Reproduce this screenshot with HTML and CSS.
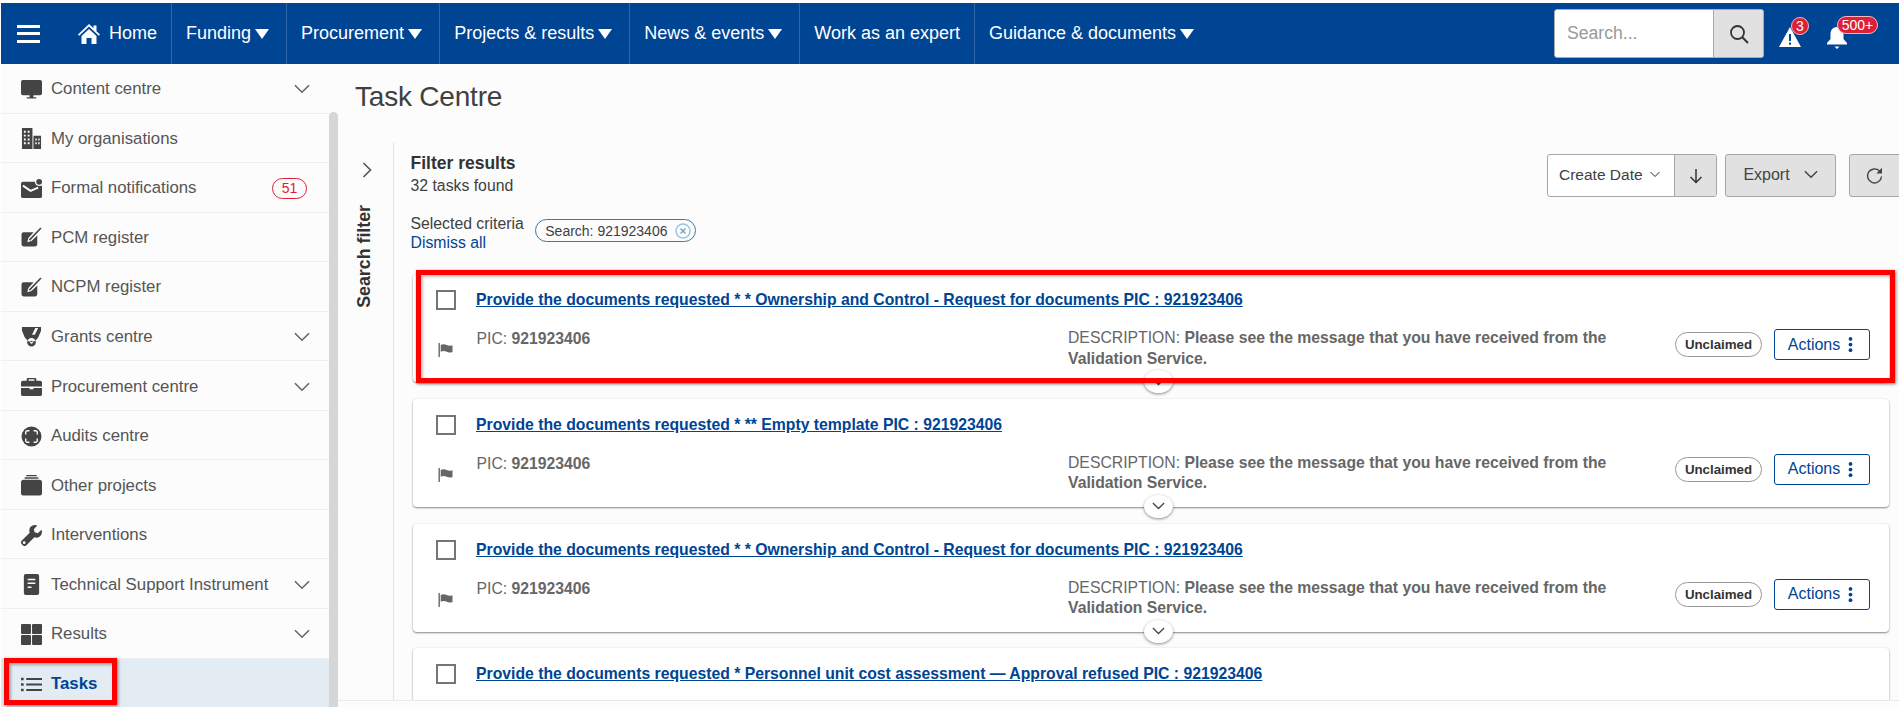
FILE: index.html
```html
<!DOCTYPE html>
<html lang="en">
<head>
  <meta charset="UTF-8">
  <title>Task Centre</title>
  <link rel="stylesheet" href="styles.css">
</head>
<body>
  <svg class="defs" aria-hidden="true">
    <symbol id="i-chev" viewBox="0 0 16 10"><path d="M1 1.2l7 7 7-7" fill="none" stroke="currentColor" stroke-width="1.6"/></symbol>
    <symbol id="i-flag" viewBox="0 0 16 16"><path d="M1 1h1.400v14H1zM3.200 3c2.500-1.200 4.300-.8 6 0s3.500 1 5.800.2V10c-2.300.9-4.100.6-5.800-.2s-3.500-1.100-6-.1z" fill="currentColor"/></symbol>
    <symbol id="i-kebab" viewBox="0 0 4 16"><circle cx="2" cy="2" r="2"/><circle cx="2" cy="8" r="2"/><circle cx="2" cy="14" r="2"/></symbol>
    <symbol id="i-edit" viewBox="0 0 20 20"><path d="M2.500 5H12l-5 5.500-1 4 4-1.200L15.500 8v8.500a2 2 0 0 1-2 2h-11a2 2 0 0 1-2-2V7a2 2 0 0 1 2-2z" fill="currentColor"/><path d="M8 12.500L19 1" stroke="currentColor" stroke-width="1.500" fill="none"/></symbol>
  </svg>

  <header class="topbar">
    <button class="burger" aria-label="Menu"><span></span><span></span><span></span></button>
    <nav class="mainnav">
      <a class="nav-item nav-home">
        <svg class="home-ico" viewBox="0 0 22 20"><path fill="currentColor" d="M11 0l4.500 4.300V1.500h3v5.700L22 10.500l-1.200 1.300L11 2.600 1.200 11.800 0 10.500zM3.500 12L11 5l7.500 7v8h-5v-6h-5v6h-5z"/></svg>
        Home
      </a>
      <a class="nav-item has-caret">Funding<i class="caret"></i></a>
      <a class="nav-item has-caret">Procurement<i class="caret"></i></a>
      <a class="nav-item has-caret">Projects &amp; results<i class="caret"></i></a>
      <a class="nav-item has-caret">News &amp; events<i class="caret"></i></a>
      <a class="nav-item">Work as an expert</a>
      <a class="nav-item has-caret nav-last">Guidance &amp; documents<i class="caret"></i></a>
    </nav>
    <div class="searchbox">
      <span class="search-input">Search...</span>
      <span class="search-btn">
        <svg viewBox="0 0 20 20" width="20" height="20"><circle cx="8.500" cy="8.500" r="6.500" fill="none" stroke="currentColor" stroke-width="1.800"/><path d="M13.300 13.300L19 19" stroke="currentColor" stroke-width="2"/></svg>
      </span>
    </div>
    <div class="alert-ico">
      <svg viewBox="0 0 22 20" width="22" height="20"><path fill="#fff" d="M11 0l11 20H0z"/><path fill="#004494" d="M10 7h2v7h-2zM10 15.500h2v2.200h-2z"/></svg>
      <span class="count count-round">3</span>
    </div>
    <div class="bell-ico">
      <svg viewBox="0 0 20 22" width="20" height="22"><path fill="#fff" d="M10 0c4 0 6.500 3 6.500 7v5l3.500 4v1.500H0V16l3.500-4V7C3.500 3 6 0 10 0zM7.500 19.500h5L10 22z"/></svg>
      <span class="count count-wide">500+</span>
    </div>
  </header>

  <div class="layout">
    <aside class="sidebar">
      <ul class="sidemenu">
        <li class="side-row">
          <svg class="side-ico" viewBox="0 0 22 20"><path fill="currentColor" d="M2 0h18a2 2 0 0 1 2 2v12a2 2 0 0 1-2 2H2a2 2 0 0 1-2-2V2a2 2 0 0 1 2-2zM9 16h4v2h3v1.500H6V18h3z"/></svg>
          <span class="side-label">Content centre</span><svg class="side-chev"><use href="#i-chev"/></svg>
        </li>
        <li class="side-row">
          <svg class="side-ico" viewBox="0 0 22 22"><path fill="currentColor" fill-rule="evenodd" d="M1 0h11v22H1zM3 3v2h2V3zm4 0v2h2V3zM3 7v2h2V7zm4 0v2h2V7zM3 11v2h2v-2zm4 0v2h2v-2zM3 15v2h2v-2zm4 0v2h2v-2zM13 8h8v14h-8zm2 3v2h1.500v-2zm3 0v2h1.500v-2zm-3 4v2h1.500v-2zm3 0v2h1.500v-2z"/></svg>
          <span class="side-label">My organisations</span>
        </li>
        <li class="side-row">
          <svg class="side-ico" viewBox="0 0 22 20"><path fill="currentColor" d="M2 3h12.500a5 5 0 0 0 5 4.500c.9 0 1.700-.2 2.500-.6V18a2 2 0 0 1-2 2H2a2 2 0 0 1-2-2V5a2 2 0 0 1 2-2z"/><circle cx="19" cy="3" r="3" fill="currentColor"/><path d="M2 7l8 5.500L18 9" fill="none" stroke="#fcfcfc" stroke-width="2"/></svg>
          <span class="side-label">Formal notifications</span><span class="side-badge">51</span>
        </li>
        <li class="side-row">
          <svg class="side-ico"><use href="#i-edit"/></svg>
          <span class="side-label">PCM register</span>
        </li>
        <li class="side-row">
          <svg class="side-ico"><use href="#i-edit"/></svg>
          <span class="side-label">NCPM register</span>
        </li>
        <li class="side-row">
          <svg class="side-ico" viewBox="0 0 22 22"><path fill="currentColor" fill-rule="evenodd" d="M1 0h20v4l-3 7-2.500 3a6.500 6.500 0 0 1-9 0L4 11 1 4zM15 1l-3.500 7h3L18 1zM11 11.500a4.500 4.500 0 1 0 0 9 4.500 4.500 0 0 0 0-9zm0 3a1.500 1.500 0 1 1 0 3 1.500 1.500 0 0 1 0-3z"/></svg>
          <span class="side-label">Grants centre</span><svg class="side-chev"><use href="#i-chev"/></svg>
        </li>
        <li class="side-row">
          <svg class="side-ico" viewBox="0 0 22 20"><path fill="currentColor" fill-rule="evenodd" d="M7 1h8a1 1 0 0 1 1 1v2h4a2 2 0 0 1 2 2v4H0V6a2 2 0 0 1 2-2h4V2a1 1 0 0 1 1-1zm1 1.500V4h6V2.500zM0 11.500h9V13h4v-1.500h9V18a2 2 0 0 1-2 2H2a2 2 0 0 1-2-2z"/></svg>
          <span class="side-label">Procurement centre</span><svg class="side-chev"><use href="#i-chev"/></svg>
        </li>
        <li class="side-row">
          <svg class="side-ico" viewBox="0 0 20 20"><circle cx="10" cy="10" r="9.500" fill="currentColor"/><path d="M4.500 8V6a1.500 1.500 0 0 1 1.500-1.500h2M12 4.500h2A1.500 1.500 0 0 1 15.500 6v2M15.500 12v2a1.500 1.500 0 0 1-1.500 1.500h-2M8 15.500H6A1.500 1.500 0 0 1 4.500 14v-2" fill="none" stroke="#fcfcfc" stroke-width="1.300"/></svg>
          <span class="side-label">Audits centre</span>
        </li>
        <li class="side-row">
          <svg class="side-ico" viewBox="0 0 20 20"><path fill="currentColor" d="M5 0h10v1.200H5zM3.500 2.200h13v1.300h-13zM2.500 4.500h15A2.500 2.500 0 0 1 20 7v10.500a2 2 0 0 1-2 2H2a2 2 0 0 1-2-2V7a2.500 2.500 0 0 1 2.500-2.500z"/></svg>
          <span class="side-label">Other projects</span>
        </li>
        <li class="side-row">
          <svg class="side-ico" viewBox="0 0 20 20"><path fill="currentColor" fill-rule="evenodd" d="M19.500 4.500l-3.500 3.300-3-.8-.8-3L15.500.5C13-.6 10 .2 8.700 2.300 7.700 4 7.700 5.700 8.300 7.300L.8 14.800a2.500 2.500 0 0 0 0 3.500l.9.9a2.500 2.500 0 0 0 3.500 0l7.500-7.500c1.600.6 3.300.5 4.900-.5 2.100-1.400 2.900-4.200 1.900-6.700zM3 15.500a1.300 1.300 0 1 1 0 2.600 1.300 1.300 0 0 1 0-2.600z"/></svg>
          <span class="side-label">Interventions</span>
        </li>
        <li class="side-row">
          <svg class="side-ico" viewBox="0 0 22 22"><path fill="currentColor" fill-rule="evenodd" d="M5 0h12a2 2 0 0 1 2 2v18a2 2 0 0 1-2 2H5a2 2 0 0 1-2-2V2a2 2 0 0 1 2-2zm2 5v1.600h8V5zm0 4v1.600h8V9zm0 4v1.600h4V13z"/></svg>
          <span class="side-label">Technical Support Instrument</span><svg class="side-chev"><use href="#i-chev"/></svg>
        </li>
        <li class="side-row">
          <svg class="side-ico" viewBox="0 0 20 20"><path fill="currentColor" d="M1 0h7.500a1 1 0 0 1 1 1v7.500a1 1 0 0 1-1 1H1a1 1 0 0 1-1-1V1a1 1 0 0 1 1-1zM11.500 0H19a1 1 0 0 1 1 1v7.500a1 1 0 0 1-1 1h-7.500a1 1 0 0 1-1-1V1a1 1 0 0 1 1-1zM1 10.500h7.500a1 1 0 0 1 1 1V19a1 1 0 0 1-1 1H1a1 1 0 0 1-1-1v-7.500a1 1 0 0 1 1-1zM11.500 10.500H19a1 1 0 0 1 1 1V19a1 1 0 0 1-1 1h-7.500a1 1 0 0 1-1-1v-7.500a1 1 0 0 1 1-1z"/></svg>
          <span class="side-label">Results</span><svg class="side-chev"><use href="#i-chev"/></svg>
        </li>
        <li class="side-row is-active">
          <svg class="side-ico" viewBox="0 0 20 14"><path fill="currentColor" d="M0 .5h2.500V3H0zM5 .8h15v2H5zM0 5.700h2.500v2.500H0zM5 6h15v2H5zM0 11h2.500v2.500H0zM5 11.200h15v2H5z"/></svg>
          <span class="side-label">Tasks</span>
        </li>
      </ul>
      <div class="thumb"></div>
      <div class="tasks-mark"></div>
    </aside>

    <div class="main">
      <div class="main-body">
        <h1 class="page-title">Task Centre</h1>
        <div class="workspace">
          <div class="filter-rail">
            <svg class="rail-chev" viewBox="0 0 10 16"><path d="M1.500 1l7 7-7 7" fill="none" stroke="currentColor" stroke-width="1.600"/></svg>
            <span class="rail-label">Search filter</span>
          </div>
          <div class="results">
            <div class="results-head">
              <div class="results-info">
                <div class="results-title">Filter results</div>
                <div class="results-count">32 tasks found</div>
                <div class="criteria">
                  <div class="criteria-text">Selected criteria<br><a class="dismiss">Dismiss all</a></div>
                  <span class="chip">Search: 921923406
                    <svg class="chip-x" viewBox="0 0 16 16"><circle cx="8" cy="8" r="7" fill="none" stroke="#9cc6e0" stroke-width="1.500"/><path d="M5.500 5.500l5 5m0-5l-5 5" stroke="#7aa6c6" stroke-width="1.500"/></svg>
                  </span>
                </div>
              </div>
              <div class="toolbar">
                <div class="sort-group">
                  <span class="sort-select">Create Date
                    <svg class="mini-chev"><use href="#i-chev"/></svg>
                  </span>
                  <span class="sort-dir">
                    <svg viewBox="0 0 14 16" width="14" height="16"><path d="M7 1v13.500M1.500 9l5.500 5.500L12.500 9" fill="none" stroke="currentColor" stroke-width="1.500"/></svg>
                  </span>
                </div>
                <span class="tool-btn btn-export">Export<svg class="export-chev"><use href="#i-chev"/></svg></span>
                <span class="tool-btn btn-refresh">
                  <svg viewBox="0 0 18 18" width="18" height="18"><path d="M15.500 9.500a7 7 0 1 1-2-5.500" fill="none" stroke="currentColor" stroke-width="1.400"/><path d="M16 .8v5.700h-5.700z" fill="currentColor"/></svg>
                </span>
              </div>
            </div>

            <article class="task-card">
              <div class="task-top">
                <span class="checkbox"></span>
                <a class="task-title">Provide the documents requested * * Ownership and Control - Request for documents PIC : 921923406</a>
              </div>
              <div class="task-row">
                <svg class="task-flag"><use href="#i-flag"/></svg>
                <div class="task-pic">PIC: <b>921923406</b></div>
                <div class="task-desc">DESCRIPTION: <b>Please see the message that you have received from the</b><br><b>Validation Service.</b></div>
                <span class="pill">Unclaimed</span>
                <span class="actions">Actions<svg class="kebab"><use href="#i-kebab"/></svg></span>
              </div>
              <span class="expand"><svg class="expand-chev"><use href="#i-chev"/></svg></span>
              <div class="card-mark"></div>
            </article>

            <article class="task-card">
              <div class="task-top">
                <span class="checkbox"></span>
                <a class="task-title">Provide the documents requested * ** Empty template PIC : 921923406</a>
              </div>
              <div class="task-row">
                <svg class="task-flag"><use href="#i-flag"/></svg>
                <div class="task-pic">PIC: <b>921923406</b></div>
                <div class="task-desc">DESCRIPTION: <b>Please see the message that you have received from the</b><br><b>Validation Service.</b></div>
                <span class="pill">Unclaimed</span>
                <span class="actions">Actions<svg class="kebab"><use href="#i-kebab"/></svg></span>
              </div>
              <span class="expand"><svg class="expand-chev"><use href="#i-chev"/></svg></span>
            </article>

            <article class="task-card">
              <div class="task-top">
                <span class="checkbox"></span>
                <a class="task-title">Provide the documents requested * * Ownership and Control - Request for documents PIC : 921923406</a>
              </div>
              <div class="task-row">
                <svg class="task-flag"><use href="#i-flag"/></svg>
                <div class="task-pic">PIC: <b>921923406</b></div>
                <div class="task-desc">DESCRIPTION: <b>Please see the message that you have received from the</b><br><b>Validation Service.</b></div>
                <span class="pill">Unclaimed</span>
                <span class="actions">Actions<svg class="kebab"><use href="#i-kebab"/></svg></span>
              </div>
              <span class="expand"><svg class="expand-chev"><use href="#i-chev"/></svg></span>
            </article>

            <article class="task-card">
              <div class="task-top">
                <span class="checkbox"></span>
                <a class="task-title">Provide the documents requested * Personnel unit cost assessment — Approval refused PIC : 921923406</a>
              </div>
            </article>
          </div>
        </div>
      </div>
      <div class="main-foot"></div>
    </div>
  </div>
</body>
</html>
```

FILE: styles.css
```css
:root {
  --blue: #004494;
  --text: #404040;
  --muted: #555;
  --line: #efefef;
  --page: #fcfcfc;
  --btn: #e1e1e1;
  --btn-line: #a6a6a6;
  --red: #dc2035;
  --mark: #ff0000;
}
html, body { height: 100%; margin: 0; }
body {
  box-sizing: border-box;
  padding: 3px 0 0 1px;
  display: flex;
  flex-direction: column;
  overflow: hidden;
  background: #fff;
  color: var(--text);
  font-family: "Liberation Sans", Arial, sans-serif;
  font-size: 16px;
}
.defs { position: absolute; width: 0; height: 0; }
svg { display: block; flex: none; }

/* top bar */
.topbar {
  flex: none;
  height: 61px;
  display: flex;
  align-items: center;
  background: var(--blue);
  color: #fff;
}
.burger {
  width: 23px;
  height: 18px;
  margin-left: 16px;
  padding: 0;
  border: 0;
  background: none;
  display: flex;
  flex-direction: column;
  justify-content: space-between;
}
.burger span { display: block; height: 3px; background: #fff; }
.mainnav { display: flex; align-self: stretch; margin-left: 38px; }
.nav-item {
  display: flex;
  align-items: center;
  padding: 0 14px;
  border-right: 1px solid #2f67a9;
  font-size: 18px;
  white-space: nowrap;
}
.nav-home { padding-left: 0; }
.has-caret { padding-right: 17px; }
.nav-last { border-right: 0; }
.home-ico { width: 22px; height: 20px; margin-right: 9px; }
.caret {
  width: 0;
  height: 0;
  margin-left: 4px;
  border-left: 7px solid transparent;
  border-right: 7px solid transparent;
  border-top: 10px solid #fff;
}
.searchbox {
  margin-left: auto;
  box-sizing: border-box;
  width: 210px;
  height: 49px;
  display: flex;
  border: 1px solid #aaa;
  border-radius: 3px;
  overflow: hidden;
  background: #fff;
}
.search-input {
  flex: 1;
  padding-left: 12px;
  line-height: 46px;
  font-size: 17.6px;
  color: #999;
}
.search-btn {
  width: 49px;
  display: flex;
  align-items: center;
  justify-content: center;
  border-left: 1px solid #aaa;
  background: var(--btn);
  color: #333;
}
.alert-ico, .bell-ico { position: relative; }
.alert-ico { margin-left: 15px; margin-top: 6px; }
.bell-ico { margin-left: 26px; margin-right: 52px; margin-top: 8px; }
.count {
  position: absolute;
  box-sizing: border-box;
  height: 18px;
  border: 1px solid #ffb3bc;
  background: var(--red);
  color: #fff;
  font-size: 14px;
  line-height: 16px;
  text-align: center;
}
.count-round { top: -10px; left: 12px; width: 18px; border-radius: 50%; }
.count-wide { top: -11px; left: 10px; width: 41px; border-radius: 9px; }

/* layout */
.layout { flex: 1; min-height: 0; display: flex; background: var(--page); }

/* side menu */
.sidebar {
  position: relative;
  flex: none;
  width: 337px;
  overflow: hidden;
}
.sidemenu { width: 328px; margin: 0; padding: 0; list-style: none; }
.side-row {
  box-sizing: border-box;
  height: 49.55px;
  display: flex;
  align-items: center;
  padding: 2px 20px 0;
  border-bottom: 1px solid var(--line);
  color: var(--muted);
  font-size: 16.8px;
}
.side-ico { width: 21px; height: 21px; color: #444; }
.side-label { margin-left: 9px; white-space: nowrap; }
.side-chev { width: 16px; height: 10px; margin-left: auto; margin-right: -1px; color: #666; }
.side-badge {
  box-sizing: border-box;
  width: 35px;
  height: 21px;
  margin-left: auto;
  margin-right: 2px;
  border: 1px solid var(--red);
  border-radius: 11px;
  color: var(--red);
  font-size: 14px;
  line-height: 18px;
  text-align: center;
}
.is-active { background: #e3ebf3; border-bottom: 0; }
.is-active .side-label { color: var(--blue); font-weight: bold; }
.thumb {
  position: absolute;
  top: 48px;
  bottom: 0;
  right: 0;
  width: 9px;
  border-radius: 5px 5px 0 0;
  background: #d6d6d6;
}
.tasks-mark {
  position: absolute;
  left: 3px;
  bottom: 2px;
  box-sizing: border-box;
  width: 113px;
  height: 47px;
  border: 5px solid var(--mark);
  box-shadow: 1px 1px 3px rgba(0, 0, 0, .5), inset 2px 2px 3px rgba(0, 0, 0, .3);
}

/* main area */
.main { flex: 1; min-width: 0; display: flex; flex-direction: column; }
.main-body { flex: 1; min-height: 0; overflow: hidden; }
.main-foot { flex: none; height: 7px; border-top: 1px solid #e6e9ef; box-sizing: border-box; }
.page-title {
  margin: 0;
  height: 78px;
  padding-left: 17px;
  font-size: 28px;
  font-weight: normal;
  letter-spacing: -.2px;
  line-height: 66px;
  color: #404040;
}
.workspace { display: flex; height: 560px; }
.filter-rail {
  flex: none;
  box-sizing: border-box;
  width: 56px;
  border-right: 1px solid #e3e3e3;
  padding: 20px 0 0 24px;
  color: #333;
}
.rail-chev { width: 10px; height: 16px; color: #555; }
.rail-label {
  display: block;
  margin: 27px 0 0 -8px;
  writing-mode: vertical-rl;
  transform: rotate(180deg);
  font-weight: bold;
  font-size: 17.8px;
}
.results { flex: 1; min-width: 0; padding-left: 16px; }
.results-head {
  height: 132px;
  display: flex;
  justify-content: space-between;
  box-sizing: border-box;
  padding-top: 10px;
}
.results-info { padding-left: .5px; }
.results-title { font-size: 17.5px; font-weight: bold; color: #333; line-height: 22px; }
.results-count { font-size: 15.8px; line-height: 24px; }
.criteria { display: flex; align-items: flex-start; margin-top: 16px; }
.criteria-text { font-size: 15.8px; line-height: 19px; }
.dismiss { color: var(--blue); }
.chip {
  display: flex;
  align-items: center;
  box-sizing: border-box;
  height: 23px;
  margin-top: 5px;
  margin-left: 11.5px;
  padding: 0 4px 0 9px;
  border: 1px solid #2a7fb8;
  border-radius: 12px;
  font-size: 14px;
  white-space: nowrap;
}
.chip-x { width: 16px; height: 16px; margin-left: 8px; }
.toolbar { display: flex; align-items: flex-start; margin-top: 2px; margin-right: -10px; }
.sort-group {
  display: flex;
  box-sizing: border-box;
  width: 170px;
  height: 43px;
  border: 1px solid var(--btn-line);
  border-radius: 3px;
  overflow: hidden;
  background: #fff;
}
.sort-select {
  flex: 1;
  display: flex;
  align-items: center;
  padding: 0 0 2px 11px;
  font-size: 15.5px;
  white-space: nowrap;
}
.mini-chev { width: 10px; height: 7px; margin-left: 7px; color: #222; }
.sort-dir {
  width: 41px;
  display: flex;
  align-items: center;
  justify-content: center;
  border-left: 1px solid var(--btn-line);
  background: var(--btn);
  color: #333;
}
.tool-btn {
  display: flex;
  align-items: center;
  justify-content: center;
  box-sizing: border-box;
  height: 43px;
  padding-bottom: 2px;
  border: 1px solid var(--btn-line);
  border-radius: 3px;
  background: var(--btn);
  color: #444;
  font-size: 16px;
}
.btn-export { width: 111px; margin-left: 8px; }
.export-chev { width: 14px; height: 9px; margin-left: 14px; }
.btn-refresh { width: 60px; margin-left: 13px; justify-content: flex-start; padding-left: 16px; padding-bottom: 0; }

/* task cards */
.task-card {
  position: relative;
  box-sizing: border-box;
  width: 1475.5px;
  height: 108px;
  margin: 0 0 16.8px 3px;
  padding: 16px 18px 0 22.5px;
  background: #fff;
  border-radius: 4px;
  box-shadow: 0 1px 2px rgba(0, 0, 0, .45), 0 0 2px rgba(0, 0, 0, .08);
}
.task-top { display: flex; align-items: center; }
.checkbox {
  flex: none;
  box-sizing: border-box;
  width: 20px;
  height: 20px;
  border: 2px solid #757575;
  background: #fff;
}
.task-title {
  margin-left: 20.5px;
  color: var(--blue);
  font-size: 15.75px;
  font-weight: bold;
  text-decoration: underline;
  white-space: nowrap;
}
.task-row { display: flex; align-items: flex-start; margin-top: 19px; color: #666; font-size: 15.75px; }
.task-flag { width: 17px; height: 16px; margin: 13px 23px 0 1px; color: #666; }
.task-pic { width: 590px; flex: none; line-height: 20px; }
.task-desc { width: 607px; flex: none; margin: -1px 0 0 1.500px; line-height: 20.6px; box-sizing: border-box; }
.pill {
  box-sizing: border-box;
  width: 87px;
  height: 25px;
  margin-top: 3px;
  border: 1px solid #999;
  border-radius: 13px;
  background: #fff;
  color: #333;
  font-size: 13.3px;
  font-weight: bold;
  line-height: 23px;
  text-align: center;
}
.actions {
  display: flex;
  align-items: center;
  justify-content: center;
  box-sizing: border-box;
  width: 96px;
  height: 31px;
  margin-left: 12px;
  padding-right: 3px;
  border: 1px solid var(--blue);
  border-radius: 3px;
  background: #fff;
  color: var(--blue);
  font-size: 16px;
}
.kebab { width: 5px; height: 15px; margin-left: 8px; fill: var(--blue); }
.expand {
  position: absolute;
  left: 731px;
  bottom: -11px;
  width: 29px;
  height: 23px;
  display: flex;
  align-items: center;
  justify-content: center;
  border-radius: 50%;
  background: #fff;
  box-shadow: 0 1px 3px rgba(0, 0, 0, .45);
  color: #444;
}
.expand-chev { width: 13px; height: 8px; }
.card-mark {
  position: absolute;
  left: 3px;
  top: -4px;
  box-sizing: border-box;
  width: 1479px;
  height: 113px;
  border: 5px solid var(--mark);
  box-shadow: 1px 1px 3px rgba(0, 0, 0, .5), inset 2px 2px 3px rgba(0, 0, 0, .25);
  pointer-events: none;
}
```
